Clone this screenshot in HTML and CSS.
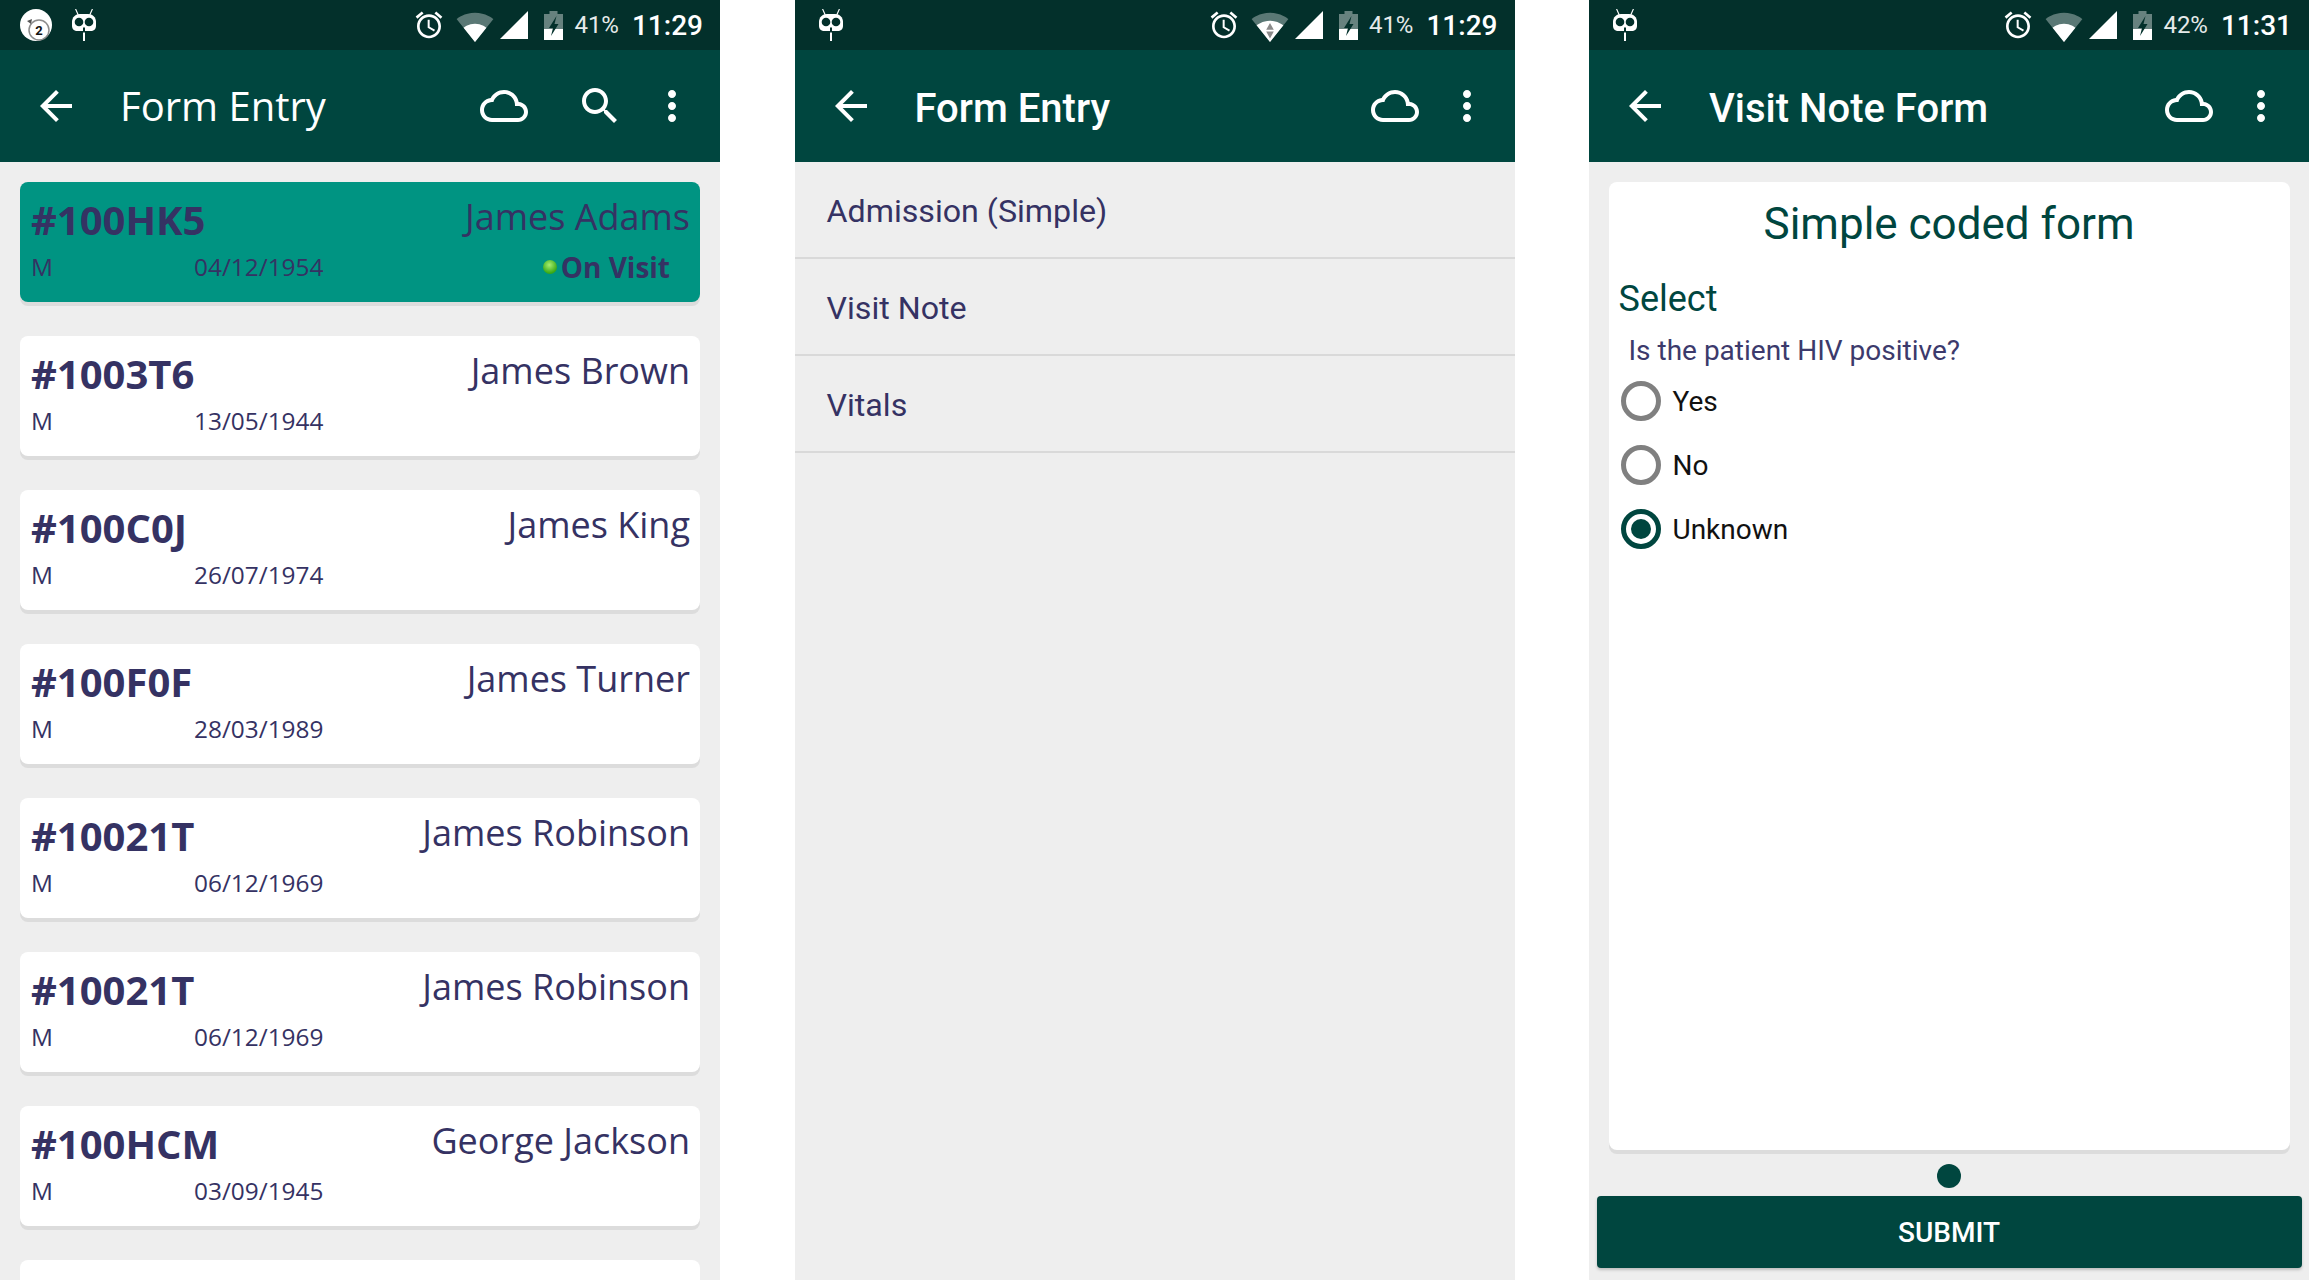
FILE: index.html
```html
<!DOCTYPE html>
<html lang="en">
<head>
  <meta charset="UTF-8">
  <title>Form Entry</title>
  <link rel="stylesheet" href="styles.css">
</head>
<body>
<svg class="sprite" xmlns="http://www.w3.org/2000/svg">
  <symbol id="i-back" viewBox="0 0 24 24"><path d="M20 11H7.830l5.590-5.590L12 4l-8 8 8 8 1.410-1.410L7.830 13H20v-2z"/></symbol>
  <symbol id="i-cloud" viewBox="0 0 24 24"><path d="M19.350 10.040C18.670 6.590 15.640 4 12 4 9.110 4 6.600 5.640 5.350 8.040 2.340 8.360 0 10.910 0 14c0 3.310 2.690 6 6 6h13c2.760 0 5-2.240 5-5 0-2.640-2.050-4.780-4.650-4.960zM19 18H6c-2.210 0-4-1.790-4-4s1.790-4 4-4h.710C7.370 7.690 9.480 6 12 6c3.040 0 5.500 2.460 5.500 5.500v.5H19c1.660 0 3 1.340 3 3s-1.340 3-3 3z"/></symbol>
  <symbol id="i-search" viewBox="0 0 24 24"><path d="M15.500 14h-.790l-.280-.270C15.410 12.590 16 11.110 16 9.500 16 5.910 13.090 3 9.500 3S3 5.910 3 9.500 5.910 16 9.500 16c1.610 0 3.090-.590 4.230-1.570l.270.280v.790l5 4.990L20.490 19l-4.990-5zm-6 0C7.010 14 5 11.990 5 9.500S7.010 5 9.500 5 14 7.010 14 9.500 11.990 14 9.500 14z"/></symbol>
  <symbol id="i-more" viewBox="0 0 24 24"><path d="M12 8c1.100 0 2-.900 2-2s-.900-2-2-2-2 .900-2 2 .900 2 2 2zm0 2c-1.100 0-2 .900-2 2s.900 2 2 2 2-.900 2-2-.900-2-2-2zm0 6c-1.100 0-2 .900-2 2s.900 2 2 2 2-.900 2-2-.900-2-2-2z"/></symbol>
  <symbol id="i-alarm" viewBox="0 0 24 24"><path d="M22 5.720l-4.600-3.860-1.290 1.530 4.600 3.860L22 5.720zM7.880 3.390L6.600 1.860 2 5.710l1.290 1.530 4.590-3.850zM12.500 8H11v6l4.750 2.850.750-1.230-4-2.370V8zM12 4c-4.970 0-9 4.030-9 9s4.030 9 9 9 9-4.030 9-9-4.030-9-9-9zm0 16c-3.870 0-7-3.130-7-7s3.130-7 7-7 7 3.130 7 7-3.130 7-7 7z"/></symbol>
  <symbol id="i-wifi" viewBox="0 0 24 24">
    <path opacity=".35" d="M12.010 21.490L23.640 7c-.450-.340-4.930-4-11.640-4C5.280 3 .810 6.660.360 7l11.640 14.500.010-.010z"/>
    <path d="M4.790 12.520l7.200 8.980H12l.010-.010 7.200-8.980C18.850 12.240 16.100 10 12 10s-6.850 2.240-7.210 2.520z"/>
  </symbol>
  <symbol id="i-wifi-data" viewBox="0 0 24 24">
    <path opacity=".35" d="M12.010 21.490L23.640 7c-.450-.340-4.930-4-11.640-4C5.280 3 .810 6.660.360 7l11.640 14.500.010-.010z"/>
    <path d="M3.530 10.950l8.460 10.540.010.010.010-.010 8.460-10.540C20.040 10.620 16.810 8 12 8c-4.810 0-8.040 2.620-8.470 2.950z"/>
    <path fill="#8a8a8a" d="M12 9.500l2.400 4.300H9.600zM9.600 14.900h4.800L12 19.200z"/>
  </symbol>
  <symbol id="i-signal" viewBox="0 0 28 28"><path d="M28 0v28H0z"/></symbol>
  <symbol id="i-battery" viewBox="0 0 19 29">
    <path opacity=".4" d="M5.500 0h8v3H19v26H0V3h5.500z"/>
    <path d="M0 18h19v11H0z"/>
    <path fill="#03302b" d="M12.500 5L5 17h4l-2 8 7.500-12h-4z"/>
  </symbol>
  <symbol id="i-cm" viewBox="0 0 24 32">
    <path d="M0 13c0-5 3.500-8 8-8h8c4.500 0 8 3 8 8v4c0 3-2.200 5-5.500 5h-13C2.200 22 0 20 0 17z"/>
    <path d="M3 0l2.800 6.500 1.100-.4L4.200 0zM21 0l-2.800 6.500-1.100-.4L19.800 0z"/>
    <path d="M11 23.500h2V32h-2z"/>
    <circle cx="7" cy="13" r="4.300" fill="#03302b"/>
    <circle cx="17" cy="13" r="4.300" fill="#03302b"/>
    <path fill="#03302b" d="M11 18.500h2V22h-2z"/>
  </symbol>
</svg>

<div class="screens">

  <!-- patient list -->
  <section class="phone">
    <div class="status-bar">
      <svg class="note-icon" viewBox="0 0 32 32">
        <circle cx="16" cy="16" r="16" fill="#fff"/>
        <circle cx="19" cy="21" r="10" fill="#fff" stroke="#8d8d8d" stroke-width="1.500"/>
        <path d="M7 12l5-2-1 5z" fill="#555"/>
        <text x="19" y="26" class="note-count" text-anchor="middle">2</text>
      </svg>
      <svg class="cm-icon"><use href="#i-cm"/></svg>
      <span class="status-right">
        <svg class="st-alarm"><use href="#i-alarm"/></svg>
        <svg class="st-wifi"><use href="#i-wifi"/></svg>
        <svg class="st-signal"><use href="#i-signal"/></svg>
        <svg class="st-battery"><use href="#i-battery"/></svg>
        <span class="st-pct">41%</span>
        <span class="st-time">11:29</span>
      </span>
    </div>
    <header class="app-bar">
      <svg class="ic back"><use href="#i-back"/></svg>
      <span class="bar-title light">Form Entry</span>
      <svg class="ic cloud"><use href="#i-cloud"/></svg>
      <svg class="ic search"><use href="#i-search"/></svg>
      <svg class="ic more"><use href="#i-more"/></svg>
    </header>
    <div class="patient-list">
      <article class="card active">
        <div class="card-top"><span class="pid">#100HK5</span><span class="pname">James Adams</span></div>
        <div class="card-sub"><span class="gender">M</span><span class="dob">04/12/1954</span><span class="visit"><i class="visit-dot"></i>On Visit</span></div>
      </article>
      <article class="card">
        <div class="card-top"><span class="pid">#1003T6</span><span class="pname">James Brown</span></div>
        <div class="card-sub"><span class="gender">M</span><span class="dob">13/05/1944</span></div>
      </article>
      <article class="card">
        <div class="card-top"><span class="pid">#100C0J</span><span class="pname">James King</span></div>
        <div class="card-sub"><span class="gender">M</span><span class="dob">26/07/1974</span></div>
      </article>
      <article class="card">
        <div class="card-top"><span class="pid">#100F0F</span><span class="pname">James Turner</span></div>
        <div class="card-sub"><span class="gender">M</span><span class="dob">28/03/1989</span></div>
      </article>
      <article class="card">
        <div class="card-top"><span class="pid">#10021T</span><span class="pname">James Robinson</span></div>
        <div class="card-sub"><span class="gender">M</span><span class="dob">06/12/1969</span></div>
      </article>
      <article class="card">
        <div class="card-top"><span class="pid">#10021T</span><span class="pname">James Robinson</span></div>
        <div class="card-sub"><span class="gender">M</span><span class="dob">06/12/1969</span></div>
      </article>
      <article class="card">
        <div class="card-top"><span class="pid">#100HCM</span><span class="pname">George Jackson</span></div>
        <div class="card-sub"><span class="gender">M</span><span class="dob">03/09/1945</span></div>
      </article>
      <article class="card"></article>
    </div>
  </section>

  <!-- form list -->
  <section class="phone">
    <div class="status-bar">
      <svg class="cm-icon first"><use href="#i-cm"/></svg>
      <span class="status-right">
        <svg class="st-alarm"><use href="#i-alarm"/></svg>
        <svg class="st-wifi"><use href="#i-wifi-data"/></svg>
        <svg class="st-signal"><use href="#i-signal"/></svg>
        <svg class="st-battery"><use href="#i-battery"/></svg>
        <span class="st-pct">41%</span>
        <span class="st-time">11:29</span>
      </span>
    </div>
    <header class="app-bar">
      <svg class="ic back"><use href="#i-back"/></svg>
      <span class="bar-title">Form Entry</span>
      <svg class="ic cloud"><use href="#i-cloud"/></svg>
      <svg class="ic more"><use href="#i-more"/></svg>
    </header>
    <ul class="form-list">
      <li>Admission (Simple)</li>
      <li>Visit Note</li>
      <li>Vitals</li>
    </ul>
  </section>

  <!-- visit note form -->
  <section class="phone">
    <div class="status-bar">
      <svg class="cm-icon first"><use href="#i-cm"/></svg>
      <span class="status-right">
        <svg class="st-alarm"><use href="#i-alarm"/></svg>
        <svg class="st-wifi"><use href="#i-wifi"/></svg>
        <svg class="st-signal"><use href="#i-signal"/></svg>
        <svg class="st-battery"><use href="#i-battery"/></svg>
        <span class="st-pct">42%</span>
        <span class="st-time">11:31</span>
      </span>
    </div>
    <header class="app-bar">
      <svg class="ic back"><use href="#i-back"/></svg>
      <span class="bar-title">Visit Note Form</span>
      <svg class="ic cloud"><use href="#i-cloud"/></svg>
      <svg class="ic more"><use href="#i-more"/></svg>
    </header>
    <div class="form-page">
      <div class="form-card">
        <h1 class="form-title">Simple coded form</h1>
        <h2 class="form-section">Select</h2>
        <p class="question">Is the patient HIV positive?</p>
        <div class="radio-row"><i class="radio"></i>Yes</div>
        <div class="radio-row"><i class="radio"></i>No</div>
        <div class="radio-row"><i class="radio checked"></i>Unknown</div>
      </div>
      <i class="page-dot"></i>
      <button class="submit">SUBMIT</button>
    </div>
  </section>

</div>
</body>
</html>
```

FILE: styles.css
```css
* {
  margin: 0;
  padding: 0;
  box-sizing: border-box;
}

html, body {
  height: 1280px;
  overflow: hidden;
  background-color: #fff;
}

.sprite {
  display: none;
}

.screens {
  display: flex;
  justify-content: space-between;
  height: 1280px;
}

.phone {
  width: 720px;
  height: 1280px;
  overflow: hidden;
  background-color: #eee;
  font-family: Roboto, sans-serif;
  color: #353263;
}

/* status bar */
.status-bar {
  height: 50px;
  display: flex;
  align-items: center;
  background-color: #03302b;
  color: #fff;
  fill: #fff;
}

.note-icon {
  width: 32px;
  height: 32px;
  margin-left: 20px;
}

.note-count {
  font: 700 13px Roboto, sans-serif;
  fill: #111;
}

.cm-icon {
  width: 24px;
  height: 32px;
  margin-left: 20px;
}

.cm-icon.first {
  margin-left: 24px;
}

.status-right {
  margin-left: auto;
  padding-right: 17px;
  display: flex;
  align-items: center;
}

.st-alarm {
  width: 32px;
  height: 32px;
  margin-right: 11px;
}

.st-wifi {
  width: 38px;
  height: 38px;
  margin-top: 3px;
  margin-right: 6px;
}

.st-signal {
  width: 28px;
  height: 28px;
  margin-right: 16px;
}

.st-battery {
  width: 19px;
  height: 29px;
  margin-right: 11px;
}

.st-pct {
  font-size: 24px;
  margin-right: 13px;
  opacity: .9;
}

.st-time {
  font-size: 28px;
  font-weight: 500;
}

/* app bar */
.app-bar {
  height: 112px;
  display: flex;
  align-items: center;
  padding: 0 24px 0 32px;
  background-color: #00463f;
  color: #fff;
  fill: #fff;
}

.ic {
  width: 48px;
  height: 48px;
  flex-shrink: 0;
}

.bar-title {
  margin-left: 40px;
  margin-right: auto;
  margin-top: 6px;
  font-size: 40px;
  font-weight: 500;
  line-height: 48px;
}

.bar-title.light {
  margin-top: 0;
  font-family: "Open Sans", sans-serif;
  font-size: 40px;
  font-weight: 400;
}

.ic.cloud {
  margin-right: 24px;
}

.ic.search {
  margin-left: 24px;
  margin-right: 24px;
}

/* patient cards */
.patient-list {
  padding: 20px 20px 0;
  font-family: "Open Sans", sans-serif;
}

.card {
  height: 120px;
  margin-bottom: 34px;
  padding: 11px 10px 0 11px;
  background-color: #fff;
  border-radius: 8px;
  box-shadow: 0 4px 0 #dcdcdc;
}

.card.active {
  background-color: #009482;
}

.card-top {
  display: flex;
  justify-content: space-between;
  align-items: flex-start;
  height: 59px;
}

.pid {
  font-size: 40px;
  font-weight: 700;
  line-height: 48px;
  margin-top: 3px;
}

.pname {
  margin-top: 2px;
  font-size: 36px;
  line-height: 44px;
}

.card-sub {
  display: flex;
  align-items: center;
  font-size: 24.400px;
  line-height: 30px;
}

.gender {
  width: 163px;
}

.visit {
  margin-left: auto;
  margin-right: 20px;
  display: flex;
  align-items: center;
  font-size: 28px;
  font-weight: 700;
  line-height: 30px;
}

.visit-dot {
  width: 14px;
  height: 14px;
  margin-right: 4px;
  border-radius: 50%;
  background: radial-gradient(circle at 45% 35%, #a5ee70, #38a814 70%);
}

/* form list */
.form-list {
  list-style: none;
}

.form-list li {
  height: 97px;
  padding: 29px 32px 0;
  border-bottom: 2px solid #d9d9d9;
  font-size: 32.200px;
  line-height: 40px;
}

/* visit note form */
.form-page {
  display: flex;
  flex-direction: column;
  align-items: center;
  padding-top: 20px;
}

.form-card {
  width: 681px;
  height: 968px;
  padding: 0 10px;
  background-color: #fff;
  border-radius: 8px;
  box-shadow: 0 4px 0 #dcdcdc;
}

.form-title {
  padding-top: 14px;
  font-size: 44px;
  font-weight: 400;
  line-height: 56px;
  text-align: center;
  color: #00463f;
}

.form-section {
  margin-top: 25px;
  font-size: 36px;
  font-weight: 400;
  line-height: 44px;
  color: #00463f;
}

.question {
  margin-top: 12px;
  padding-left: 10px;
  font-size: 28px;
  line-height: 36px;
  color: #3c3a6c;
}

.radio-row {
  display: flex;
  align-items: center;
  height: 64px;
  font-size: 28px;
  color: #111;
}

.radio {
  position: relative;
  width: 40px;
  height: 40px;
  margin-left: 2px;
  margin-right: 12px;
  border: 5px solid #808080;
  border-radius: 50%;
}

.radio.checked {
  border-color: #00463f;
}

.radio.checked::after {
  content: "";
  position: absolute;
  left: 5px;
  top: 5px;
  width: 20px;
  height: 20px;
  border-radius: 50%;
  background-color: #00463f;
}

.page-dot {
  width: 24px;
  height: 24px;
  margin-top: 14px;
  border-radius: 50%;
  background-color: #00463f;
}

.submit {
  width: 705px;
  height: 72px;
  margin-top: 8px;
  padding-top: 1px;
  border: 0;
  border-radius: 4px;
  background-color: #00463f;
  box-shadow: 0 2px 3px #bdbdbd;
  color: #fff;
  font: 500 28px Roboto, sans-serif;
}
```
